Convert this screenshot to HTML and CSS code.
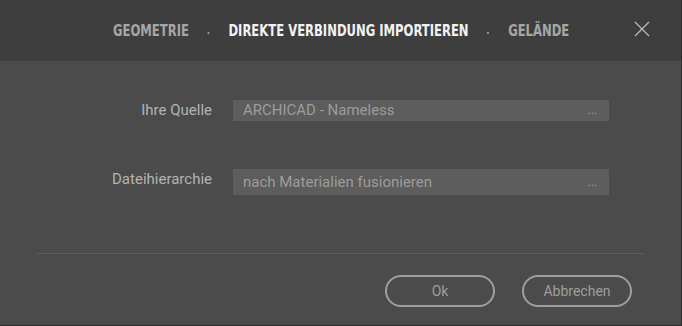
FILE: index.html
```html
<!DOCTYPE html>
<html lang="de">

<head>
  <meta charset="UTF-8" />
  <meta name="viewport" content="width=device-width, initial-scale=1.0" />
  <title>Direkte Verbindung importieren</title>
  <link rel="stylesheet" href="styles.css">
</head>

<body>
  <div class="dialog">
    <div class="dialog-header">
      <nav class="steps">
        <span class="step">Geometrie</span>
        <span class="step-dot"></span>
        <span class="step active">Direkte Verbindung importieren</span>
        <span class="step-dot"></span>
        <span class="step">Gelände</span>
      </nav>
      <button class="close-btn" aria-label="Schließen">
        <svg width="16" height="16" viewBox="0 0 16 16">
          <path d="M1 1 L15 15 M15 1 L1 15" stroke="#bdbdbd" stroke-width="1.2" fill="none" />
        </svg>
      </button>
    </div>
    <div class="dialog-body">
      <div class="form-row">
        <label class="form-label">Ihre Quelle</label>
        <div class="field field-1">
          <span>ARCHICAD - Nameless</span>
          <span class="field-more">...</span>
        </div>
      </div>
      <div class="form-row">
        <label class="form-label">Dateihierarchie</label>
        <div class="field field-2">
          <span>nach Materialien fusionieren</span>
          <span class="field-more">...</span>
        </div>
      </div>
    </div>
    <div class="dialog-footer">
      <button class="btn">Ok</button>
      <button class="btn">Abbrechen</button>
    </div>
  </div>
</body>

</html>
```

FILE: styles.css
```css
:root {
  --color-header: #3e3e3e;
  --color-body: #4b4b4b;
  --color-edge: #2c2c2c;
  --color-field: #5d5d5d;
  --color-label: #b3b3b3;
  --color-field-text: #9c9c9c;
  --color-btn: #9e9e9e;
  --color-line: #5c5c5c;
  --font-base: "Roboto", "Liberation Sans", sans-serif;
}

* {
  box-sizing: border-box;
  margin: 0;
  padding: 0;
}

body {
  font-family: var(--font-base);
  background-color: var(--color-body);
  -webkit-font-smoothing: antialiased;
}

.dialog {
  width: 682px;
  height: 326px;
  background-color: var(--color-body);
  border-right: 1px solid var(--color-edge);
  border-bottom: 1px solid var(--color-edge);
  display: flex;
  flex-direction: column;
}

.dialog-header {
  height: 61px;
  background-color: var(--color-header);
  display: flex;
  align-items: center;
  position: relative;
}

/* condensed caps: no narrow face installed, so squeeze the row */
.steps {
  display: flex;
  align-items: center;
  margin-left: 113px;
  transform: scaleX(0.86);
  transform-origin: left center;
  white-space: nowrap;
}

.step {
  font-family: "DejaVu Sans", sans-serif;
  font-stretch: condensed;
  font-weight: 700;
  font-size: 15px;
  text-transform: uppercase;
  color: #a6a6a6;
}

.step.active {
  color: #f2f2f2;
}

.step-dot {
  width: 2px;
  height: 2px;
  background-color: #9a9a9a;
  margin: 4px 22px 0;
}

.close-btn {
  position: absolute;
  right: 31px;
  top: 21px;
  background: none;
  border: none;
  width: 16px;
  height: 16px;
  cursor: pointer;
}

.close-btn svg {
  display: block;
}

.dialog-body {
  padding: 39px 0 0 0;
  height: 193px;
  border-bottom: 1px solid var(--color-line);
  margin: 0 37px;
}

.form-row {
  display: flex;
  align-items: flex-start;
}

.form-row + .form-row {
  margin-top: 48px;
}

.form-label {
  width: 175px;
  text-align: right;
  font-size: 15px;
  color: var(--color-label);
  line-height: 20px;
}

.field {
  margin-left: 21px;
  width: 376px;
  background-color: var(--color-field);
  color: var(--color-field-text);
  font-size: 15px;
  display: flex;
  justify-content: space-between;
  align-items: center;
  padding: 0 12px 0 10px;
}

.field-1 {
  height: 21px;
  line-height: 21px;
}

.field-2 {
  height: 26px;
  line-height: 26px;
}

.field-more {
  font-size: 12px;
}

.dialog-footer {
  display: flex;
  justify-content: flex-end;
  gap: 27px;
  padding: 21px 49px 0 0;
}

.btn {
  width: 110px;
  height: 32px;
  border: 2px solid var(--color-btn);
  border-radius: 16px;
  background: transparent;
  color: var(--color-btn);
  font-family: var(--font-base);
  font-size: 14px;
  cursor: pointer;
}
```
